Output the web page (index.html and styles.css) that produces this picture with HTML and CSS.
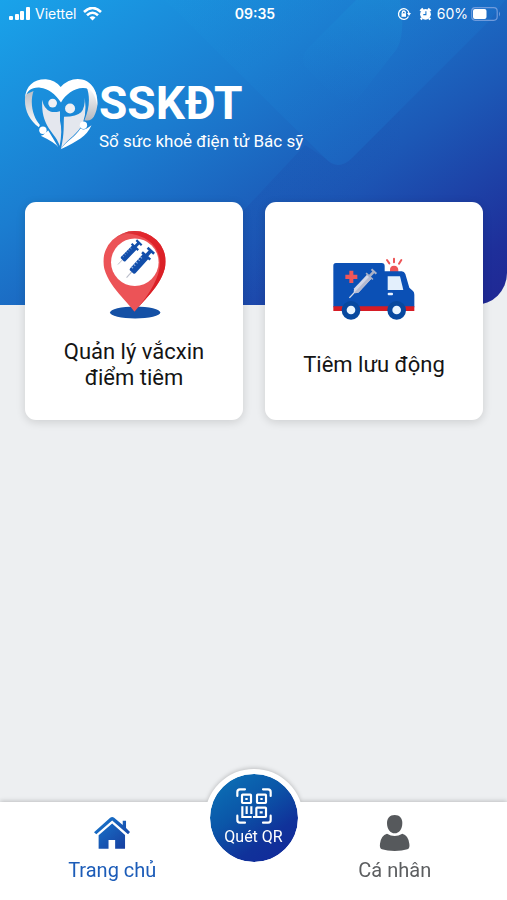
FILE: index.html
```html
<!DOCTYPE html>
<html lang="vi">
<head>
<meta charset="utf-8">
<meta name="viewport" content="width=device-width, initial-scale=1">
<title>SSKĐT</title>
<link rel="stylesheet" href="styles.css">
</head>
<body>
<header class="hero">
  <svg class="hero-art" viewBox="0 0 507 305" preserveAspectRatio="xMaxYMin slice" aria-hidden="true">
    <defs>
      <linearGradient id="band" gradientUnits="userSpaceOnUse" x1="200" y1="0" x2="340" y2="170"><stop offset="0" stop-color="#1c9be0" stop-opacity=".1"/><stop offset="1" stop-color="#1c80d8" stop-opacity=".2"/></linearGradient>
      <linearGradient id="bandB" gradientUnits="userSpaceOnUse" x1="345" y1="105" x2="385" y2="0"><stop offset="0" stop-color="#1c8ad8" stop-opacity="0"/><stop offset="1" stop-color="#1c9bdc" stop-opacity=".28"/></linearGradient>
      <linearGradient id="bandC" gradientUnits="userSpaceOnUse" x1="290" y1="165" x2="340" y2="215"><stop offset="0" stop-color="#1a3a9c" stop-opacity=".14"/><stop offset="1" stop-color="#1a3a9c" stop-opacity="0"/></linearGradient>
    </defs>
    <path fill="url(#bandC)" d="M155 305L305 145L325 158Q338 172 352 158L400 110V305Z"/>
    <path fill="url(#band)" d="M165 0L325 158Q338 172 352 158L490 20L505 0Z"/>
    <path fill="url(#bandB)" d="M308 48Q298 60 308 70L340 101Q348 108 356 101L396 50Q406 35 400 0H356Z"/>
  </svg>
  <div class="status">
    <div class="status-side">
      <svg width="22" height="14" viewBox="0 0 22 14" fill="#fff" aria-hidden="true"><rect y="9" width="4" height="4" rx="1"/><rect x="6" y="7" width="4" height="6" rx="1"/><rect x="11" y="4" width="4" height="9" rx="1"/><rect x="17" width="4" height="13" rx="1"/></svg>
      <span>Viettel</span>
      <svg class="wifi" width="19" height="14" viewBox="0 0 19 14" fill="none" stroke="#fff" stroke-width="2.600" aria-hidden="true"><path d="M1 5Q9.500-3 18 5M4 8.300Q9.500 3.200 15 8.300"/><path d="M6.500 10.500Q9.500 8 12.500 10.500L9.500 13.500Z" fill="#fff" stroke="none"/></svg>
    </div>
    <time class="clock">09:35</time>
    <div class="status-side status-right">
      <svg width="14" height="14" viewBox="0 0 14 14" fill="none" stroke="#fff" stroke-width="1.300" aria-hidden="true"><path d="M11.500 9.500A5.300 5.300 0 1 1 12 6"/><path d="M10 6h4l-2 3Z" fill="#fff" stroke="none"/><rect x="4.500" y="6.300" width="4.500" height="3.500" fill="#fff" stroke="none"/><path d="M5.300 6.500V5.500a1.500 1.500 0 0 1 3 0v1"/></svg>
      <svg class="alarm" width="13" height="14" viewBox="0 0 13 14" aria-hidden="true"><circle cx="6.500" cy="7.300" r="5.400" fill="#fff"/><path d="M1.300 4L4 1.600M9 1.600L11.700 4M3 11l-1.200 1.500M10 11l1.200 1.500" stroke="#fff" stroke-width="2.200"/><path d="M6.900 4.300v3.300H4.300" fill="none" stroke="#1a76cc" stroke-width="1.100"/></svg>
      <span>60%</span>
      <svg width="30" height="14" viewBox="0 0 30 14" aria-hidden="true"><rect x=".7" y=".7" width="25.500" height="12.600" rx="3.500" fill="none" stroke="#6f9bdc" stroke-width="1.200"/><rect x="2" y="2" width="13.500" height="10" rx="2" fill="#fff"/><path d="M28 4.500q2 2.500 0 5Z" fill="#6f9bdc"/></svg>
    </div>
  </div>
  <div class="brand">
    <svg class="logo" width="74" height="71" viewBox="30 26 220 212" aria-hidden="true">
      <defs>
        <linearGradient id="silverL" x1="0" y1="0" x2="0" y2="1"><stop offset="0" stop-color="#b9bec6"/><stop offset="1" stop-color="#fff"/></linearGradient>
        <linearGradient id="silverR" x1="0" y1="0" x2="0" y2="1"><stop offset="0" stop-color="#fff"/><stop offset="1" stop-color="#b4b8c0"/></linearGradient>
      </defs>
      <path fill="url(#silverL)" d="M34 72C27 110 42 148 74 170L77 163C58 143 45 101 58 62Z"/>
      <path fill="url(#silverR)" d="M216 48C228 80 225 114 210 149C224 153 232 147 238 139C251 115 252 88 243 65Q235 50 216 48Z"/>
      <path fill="#fff" d="M33 82C35 47 59 26 95 27Q122 29 139 50Q161 26 190 26C229 27 251 58 248 106C244 72 229 53 207 53C180 52 154 72 140 96C123 70 102 55 78 52C53 50 39 60 33 82Z"/>
      <circle cx="115" cy="98" r="13" fill="#eef0f4"/><circle cx="167" cy="114" r="15" fill="#eef0f4"/>
      <path fill="#e4e7ee" d="M84 88Q88 114 108 123Q119 127 137 122V151Q145 180 136 226C131 207 119 195 103 172C89 150 82 125 84 88Z"/>
      <path fill="#e4e7ee" d="M211 82Q212 112 200 125Q188 137 149 139C147 164 151 187 140 234C157 208 180 197 197 172Q219 140 211 82Z"/>
      <circle cx="86" cy="179" r="11" fill="#fff"/><circle cx="207" cy="164" r="11" fill="#fff"/>
      <path fill="#fff" d="M93 187Q104 178 101 178Q114 199 132 230Q122 216 78 195Q86 196 93 187ZM198 174Q209 182 231 164C216 198 189 211 139 236C159 209 184 198 198 174Z"/>
    </svg>
    <div class="brand-text">
      <h1>SSKĐT</h1>
      <p>Sổ sức khoẻ điện tử Bác sỹ</p>
    </div>
  </div>
</header>

<main class="cards">
  <a class="card" href="#vaccine">
    <svg width="63" height="88" viewBox="38 21 188 262" aria-hidden="true">
      <defs>
        <clipPath id="pinShape"><path d="M132 262C112 232 39 173 39 112A93 91 0 0 1 225 112C225 173 155 232 132 262Z"/></clipPath>
        <linearGradient id="pinRed" x1="0" y1="0" x2="1" y2="1"><stop offset="0" stop-color="#e52b31"/><stop offset="1" stop-color="#d51920"/></linearGradient>
        <g id="vial">
          <path d="M0 33V54" stroke="#b9bdc9" stroke-width="3"/>
          <path d="M-10-26H10V28Q10 33 5 33H-5Q-10 33-10 28Z"/>
          <path d="M-15-29H15V-22H-15ZM-5-44H5V-25H-5ZM-12-48H12V-41H-12Z"/>
          <path d="M-10-13H-4M-10-4H-4M-10 5H-4M-10 14H-4M-10 23H-4" stroke="#8fb1e1" stroke-width="3"/>
        </g>
      </defs>
      <ellipse cx="134" cy="264" rx="75" ry="18" fill="#1450a5"/>
      <g clip-path="url(#pinShape)"><path d="M30 15H230V270H30Z" fill="#ec5357"/><path d="M100 15H235V270H125Q214 170 207 108Q200 37 100 25Z" fill="url(#pinRed)"/><path d="M39 75Q70 20 145 25" fill="none" stroke="#ce3b42" stroke-width="5" opacity=".5"/></g>
      <circle cx="133" cy="114" r="71" fill="#fff"/>
      <use href="#vial" transform="translate(117 85) rotate(44) scale(.92)" fill="#124eaa"/>
      <use href="#vial" transform="translate(148 116) rotate(42) scale(1.100)" fill="#124eaa"/>
    </svg>
    <span>Quản lý vắcxin<br>điểm tiêm</span>
  </a>
  <a class="card" href="#mobile">
    <svg width="82" height="88" viewBox="38 -3 246 264" aria-hidden="true">
      <path d="M209 76Q208 62 221 62T234 76V82H209Z" fill="#ed5557"/>
      <path d="M200 45L207 55M221 41V52M243 45L236 56" stroke="#ed5557" stroke-width="6" stroke-linecap="round"/>
      <path d="M39 62Q39 54 47 54H184Q193 54 193 63V79H244Q252 79 255 87L267 128L278 138Q282 142 282 149V187H39Z" fill="#0b50b5"/>
      <path d="M39 184H282V198H39Z" fill="#d61c25"/>
      <path d="M202 94H239L249 135H202Z" fill="#e3effc"/><rect x="202" y="143" width="16" height="8" rx="3" fill="#e9f2ff"/>
      <path d="M87 77H99V89H111V102H99V114H87V102H75V89H87Z" fill="#ef5659"/>
      <g transform="translate(126 117) rotate(43)"><path d="M-2 28H2V57H-2Z" fill="#d6dae7"/><path d="M-9-31H9V26L4 34H-4L-9 26Z" fill="#d3d7e8"/><path d="M0-31H9V26L4 34H0Z" fill="#b5bad1"/><path d="M-14-34H14V-29H-14ZM-4-51H4V-31H-4ZM-10-54H10V-48H-10Z" fill="#a9b1c7"/></g>
      <circle cx="92" cy="196" r="28" fill="#07489f"/><circle cx="92" cy="195" r="13" fill="#e8f4ff"/>
      <circle cx="229" cy="196" r="28" fill="#07489f"/><circle cx="229" cy="195" r="13" fill="#e8f4ff"/>
    </svg>
    <span>Tiêm lưu động</span>
  </a>
</main>

<nav class="tabs">
  <a class="tab tab-active" href="#home">
    <svg width="36" height="36" viewBox="44 30 109 108" aria-hidden="true">
      <defs><linearGradient id="homeBlue" x1="0" y1="0" x2="1" y2="1"><stop offset="0" stop-color="#187bd0"/><stop offset="1" stop-color="#173a9c"/></linearGradient></defs>
      <path fill="url(#homeBlue)" d="M44 82L93 38Q99 33 105 38L131 60V47H141V69L153 81L147 88L99 46L51 88ZM58 91L99 55L138 90V132H108V105H88V132H58Z"/>
    </svg>
    <span>Trang chủ</span>
  </a>
  <button class="scan" type="button">
    <svg width="36" height="36" viewBox="20 18 108 108" fill="none" stroke="#fff" stroke-width="6.500" aria-hidden="true">
      <path d="M24 42V30Q24 22 32 22H47M101 22H116Q124 22 124 30V42M24 101V114Q24 122 32 122H47M101 122H116Q124 122 124 114V101" stroke-linecap="round"/>
      <rect x="38" y="38" width="27" height="25" rx="2"/><rect x="83" y="38" width="27" height="25" rx="2"/><rect x="81" y="77" width="29" height="28" rx="2"/>
      <path d="M39 73V105H67M52 73V96M66 73V96M71 105H82"/>
      <path d="M48 51H55M93 51H100M91 91H100"/>
    </svg>
    <span>Quét QR</span>
  </button>
  <a class="tab" href="#profile">
    <svg width="36" height="36" viewBox="84 42 108 108" fill="#56595c" aria-hidden="true"><path d="M137 42C152 42 160 52 160 66C160 84 150 97 137 97S114 84 114 66C114 52 122 42 137 42Z"/><path d="M114 98Q137 112 160 98Q178 103 181 128Q183 142 175 145Q160 150 137 150T99 145Q91 142 93 128Q96 103 114 98Z"/></svg>
    <span>Cá nhân</span>
  </a>
</nav>
</body>
</html>
```
FILE: styles.css
```css
* { box-sizing: border-box; }

body {
  margin: 0;
  min-height: 100vh;
  display: flex;
  flex-direction: column;
  background: #edeff1;
  color: #141414;
  font-family: Roboto, "Liberation Sans", sans-serif;
}

h1, p { margin: 0; }
a { color: inherit; text-decoration: none; }
svg { display: block; flex: none; }

.hero {
  position: relative;
  overflow: hidden;
  padding-bottom: 154px;
  border-bottom-right-radius: 32px;
  background: linear-gradient(147deg, #19a3ea 0%, #1b7dd0 36%, #1c58b6 64%, #1e2f9a 90%, #202793 100%);
  color: #fff;
}

.hero-art {
  position: absolute;
  inset: 0;
  width: 100%;
  height: 100%;
}

.status {
  position: relative;
  display: grid;
  grid-template-columns: 1fr auto 1fr;
  align-items: center;
  height: 28px;
  padding: 0 6px 0 9px;
  font: 14px/20px Inter, Roboto, sans-serif;
}

.status-side {
  display: flex;
  align-items: center;
  gap: 4px;
}

.status-right {
  justify-content: flex-end;
  gap: 3px;
}

.wifi { margin-left: 3px; }
.alarm { margin: 0 2px 0 5px; }
.clock { font-weight: 600; }

.brand {
  position: relative;
  display: flex;
  gap: 1px;
  padding: 51px 24px 0;
}

.brand h1 {
  font-size: 46px;
  line-height: 48px;
  font-weight: 700;
}

.brand p {
  padding-top: 4px;
  font-size: 17px;
  line-height: 20px;
}

.cards {
  position: relative;
  flex: 1;
  display: grid;
  grid-template-columns: 1fr 1fr;
  align-items: start;
  gap: 22px;
  margin-top: -103px;
  padding: 0 24px 120px 25px;
}

.card {
  display: flex;
  flex-direction: column;
  align-items: center;
  justify-content: center;
  gap: 20px;
  aspect-ratio: 1;
  border-radius: 11px;
  background: #fff;
  box-shadow: 0 2px 10px rgba(0, 0, 0, .14);
  font-size: 22px;
  line-height: 26px;
  text-align: center;
}

.tabs {
  position: sticky;
  bottom: 0;
  display: grid;
  grid-template-columns: 1fr 58px 1fr;
  height: 98px;
  background: #fff;
  filter: drop-shadow(0 -1px 2px rgba(0, 0, 0, .2));
}

.tab {
  display: flex;
  flex-direction: column;
  align-items: center;
  gap: 7px;
  padding-top: 13px;
  color: #5c5e60;
  font-size: 20px;
  line-height: 24px;
}

.tab-active { color: #1c5cb8; }

.scan {
  justify-self: center;
  display: flex;
  flex-direction: column;
  align-items: center;
  gap: 3px;
  width: 98px;
  height: 98px;
  margin: -33px -20px 0;
  padding: 14px 0 0;
  border: 5px solid #fff;
  border-radius: 50%;
  background: linear-gradient(145deg, #0b71b6 5%, #0b56a8 40%, #10329a 70%, #12279a 100%) padding-box, #fff;
  color: #fff;
  font: 16px/20px Roboto, "Liberation Sans", sans-serif;
}
```
